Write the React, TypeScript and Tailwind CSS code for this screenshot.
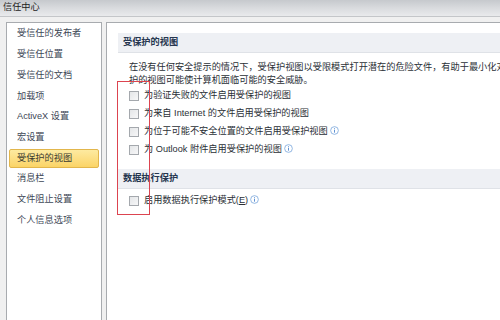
import React from "react";

const font = { fontFamily: '"Liberation Sans", "Noto Sans CJK SC", sans-serif' };

function Info() {
  return (
    <svg width="9" height="9" viewBox="0 0 10 10" className="inline-block ml-[2px] -mt-[2px]">
      <circle cx="5" cy="5" r="4.3" fill="#fff" stroke="#7aa7dc" strokeWidth="0.9" />
      <rect x="4.5" y="4.2" width="1" height="3.2" fill="#4f86cf" />
      <rect x="4.5" y="2.5" width="1" height="1" fill="#4f86cf" />
    </svg>
  );
}

function Box() {
  return (
    <span className="inline-block w-[10px] h-[10px] border border-[#a4a8ad] bg-gradient-to-br from-[#e4e6e8] to-[#f7f7f8] shrink-0" />
  );
}

function Row({ children }: { children: React.ReactNode }) {
  return (
    <div className="flex items-center h-[18px] pl-[11px] gap-[5px] whitespace-nowrap">
      <Box />
      <span className="text-[9.2px] text-[#2a2f36]">{children}</span>
    </div>
  );
}

const items = [
  "受信任的发布者",
  "受信任位置",
  "受信任的文档",
  "加载项",
  "ActiveX 设置",
  "宏设置",
  "受保护的视图",
  "消息栏",
  "文件阻止设置",
  "个人信息选项",
];

export default function App() {
  return (
    <div className="relative w-[500px] h-[320px] overflow-hidden bg-[#f0f0f0] flex flex-col" style={font}>
      <div className="h-[17px] shrink-0 bg-gradient-to-b from-[#c6c9cd] via-[#d9dbde] to-[#e9eaec] border-b border-[#c4c6c9] px-[3px] text-[9.2px] leading-[15px] text-[#1c1c1c]">
        信任中心
      </div>
      <div className="flex flex-1 pt-[5px] pl-[6px] gap-[4px] min-h-0">
        <div className="w-[96px] shrink-0 bg-white border border-[#a8abaf] border-b-0 pt-[1px] flex flex-col">
          {items.map((t) =>
            t === "受保护的视图" ? (
              <div key={t} className="h-[20.7px] flex items-center px-[2px]">
                <div className="w-full h-[19px] rounded-[2px] border border-[#e2b64c] bg-gradient-to-b from-[#fdeaa0] to-[#fbd466] flex items-center pl-[7px] text-[9.2px] text-[#3a3a30] whitespace-nowrap">
                  {t}
                </div>
              </div>
            ) : (
              <div key={t} className="h-[20.7px] flex items-center pl-[10px] text-[9.2px] text-[#3d4756] whitespace-nowrap">
                {t}
              </div>
            )
          )}
        </div>
        <div className="flex-1 bg-white border-l border-t border-[#a8abaf] pt-[10px] pl-[11px] min-w-0 overflow-hidden">
          <div className="h-[20px] bg-[#eef0f4] border-b border-[#dfe2e7] flex items-center pl-[5px] text-[9.2px] font-bold text-[#26364f]">
            受保护的视图
          </div>
          <div className="pl-[11px] pt-[8px] text-[9.2px] leading-[13px] text-[#2a2f36] whitespace-nowrap">
            <div>在没有任何安全提示的情况下，受保护视图以受限模式打开潜在的危险文件，有助于最小化对</div>
            <div>护的视图可能使计算机面临可能的安全威胁。</div>
          </div>
          <div>
            <Row>为验证失败的文件启用受保护的视图</Row>
            <Row>为来自 Internet 的文件启用受保护的视图</Row>
            <Row>
              为位于可能不安全位置的文件启用受保护视图
              <Info />
            </Row>
            <Row>
              为 Outlook 附件启用受保护的视图
              <Info />
            </Row>
          </div>
          <div className="mt-[10px] h-[20px] bg-[#eef0f4] border-b border-[#dfe2e7] flex items-center pl-[5px] text-[9.2px] font-bold text-[#26364f]">
            数据执行保护
          </div>
          <div className="mt-[3px]">
            <Row>
              启用数据执行保护模式(<span className="underline">E</span>)
              <Info />
            </Row>
          </div>
        </div>
      </div>
      <div className="absolute left-[117px] top-[81px] w-[33px] h-[134px] border border-[#dc4450]" />
    </div>
  );
}
